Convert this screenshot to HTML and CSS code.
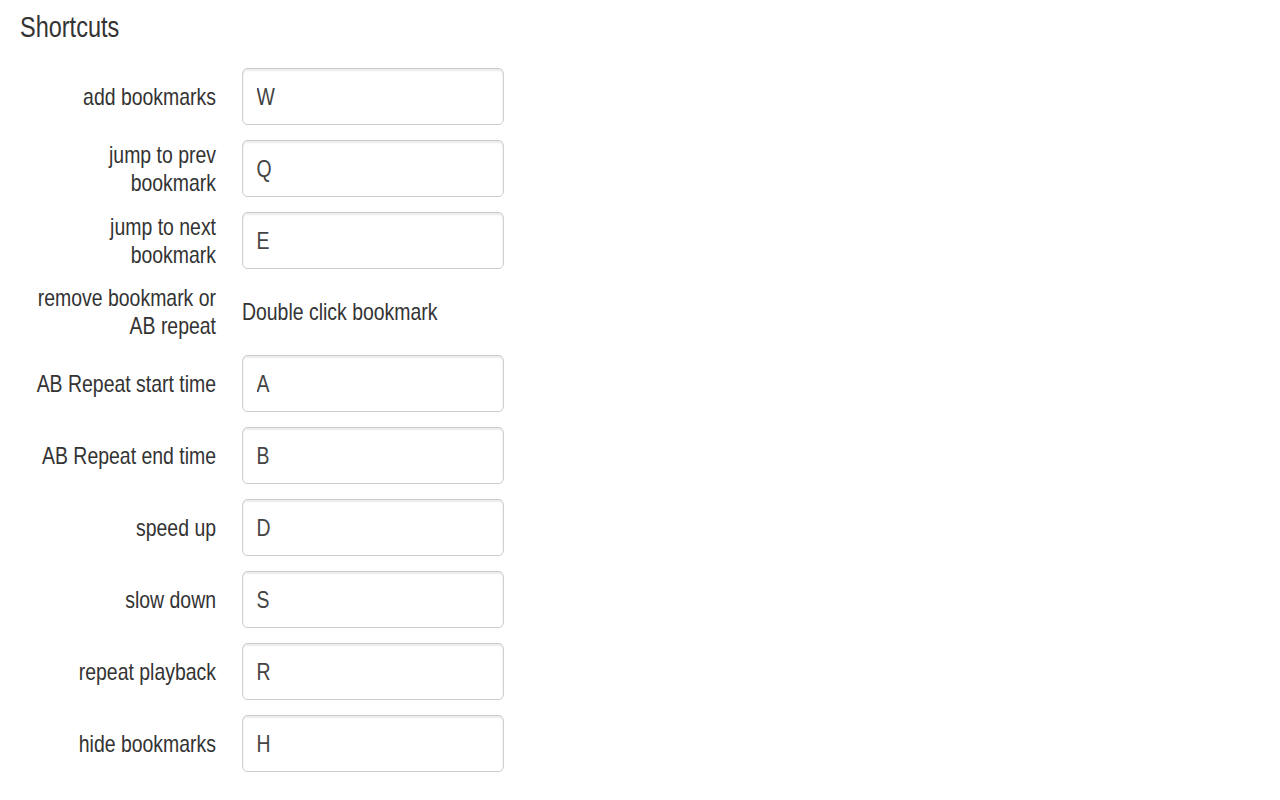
FILE: index.html
```html
<!DOCTYPE html>
<html>
<head>
<meta charset="utf-8">
<link rel="stylesheet" href="styles.css">
</head>
<body>
<div class="page">
  <h2 class="title">Shortcuts</h2>
  <form class="form">
    <div class="row"><label class="lbl">add bookmarks</label><input class="key" value="W"></div>
    <div class="row"><label class="lbl">jump to prev bookmark</label><input class="key" value="Q"></div>
    <div class="row"><label class="lbl">jump to next bookmark</label><input class="key" value="E"></div>
    <div class="row row-static"><label class="lbl">remove bookmark or AB repeat</label><span class="static">Double click bookmark</span></div>
    <div class="row"><label class="lbl">AB Repeat start time</label><input class="key" value="A"></div>
    <div class="row"><label class="lbl">AB Repeat end time</label><input class="key" value="B"></div>
    <div class="row"><label class="lbl">speed up</label><input class="key" value="D"></div>
    <div class="row"><label class="lbl">slow down</label><input class="key" value="S"></div>
    <div class="row"><label class="lbl">repeat playback</label><input class="key" value="R"></div>
    <div class="row"><label class="lbl">hide bookmarks</label><input class="key" value="H"></div>
  </form>
</div>
</body>
</html>
```
FILE: styles.css
```css
html, body {
  margin: 0;
  padding: 0;
  background: #fff;
}
/* The reference uses a narrow (Arial Narrow-like) face; emulate it by
   compressing the whole panel horizontally. */
.page {
  padding: 12px 0 0 24.7px;
  font-family: "Liberation Sans", Arial, sans-serif;
  color: #333;
  transform: scaleX(0.81);
  transform-origin: 0 0;
}
.title {
  margin: 0 0 25px 0;
  font-size: 29px;
  font-weight: normal;
  line-height: 31px;
}
.form {
  display: flex;
  flex-direction: column;
}
.row {
  display: flex;
  align-items: center;
  min-height: 57px;
  margin-bottom: 15px;
}
.row-static {
  min-height: 55px;
}
.lbl {
  flex: 0 0 232px;
  margin-left: 10px;
  text-align: right;
  font-size: 24px;
  line-height: 28px;
}
.key {
  box-sizing: border-box;
  margin: 0 0 0 32px;
  width: 323.5px;
  height: 57px;
  padding: 0 17px;
  border: 1px solid #c6c6c6;
  border-radius: 6px;
  box-shadow: inset 0 2px 2px rgba(0,0,0,0.08);
  background: #fff;
  color: #444;
  font-family: inherit;
  font-size: 24px;
  outline: none;
}
.static {
  margin-left: 32px;
  font-size: 24px;
  line-height: 28px;
}
```
